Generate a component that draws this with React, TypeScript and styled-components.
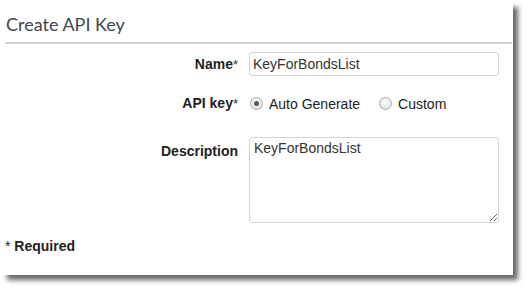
import React from 'react';
import styled, { createGlobalStyle } from 'styled-components';

const GlobalStyle = createGlobalStyle`
  html, body {
    margin: 0;
    padding: 0;
    background: #ffffff;
  }
  * {
    box-sizing: border-box;
  }
`;

/** Create API Key dialog */
const App = () => {
  return (
    <>
      <GlobalStyle />
      <Page>
        <Panel>
          <Header>
            <Title>Create API Key</Title>
          </Header>
          <Form>
            <Row $top={8} $align='center'>
              <Label>
                Name<Star>*</Star>
              </Label>
              <TextInput defaultValue='KeyForBondsList' />
            </Row>
            <Row $top={17} $align='center'>
              <Label>
                API key<Star>*</Star>
              </Label>
              <RadioGroup>
                <RadioOption>
                  <RadioDot $checked />
                  Auto Generate
                </RadioOption>
                <RadioOption>
                  <RadioDot />
                  Custom
                </RadioOption>
              </RadioGroup>
            </Row>
            <Row $top={23} $align='start'>
              <Label $padTop={4}>Description</Label>
              <TextArea defaultValue='KeyForBondsList' />
            </Row>
          </Form>
          <RequiredNote>
            <span>* </span>
            <strong>Required</strong>
          </RequiredNote>
        </Panel>
      </Page>
    </>
  );
};
export default App;

const Page = styled.div`
  width: 528px;
  height: 290px;
  padding: 0 15px 15px 0;
`;

const Panel = styled.section`
  width: 513px;
  height: 275px;
  background: #ffffff;
  box-shadow: 6px 6px 5px -1px rgba(0, 0, 0, 0.6);
  display: flex;
  flex-direction: column;
`;

const Header = styled.div`
  margin: 0 1px 0 5px;
  height: 44px;
  border-bottom: 2px solid #cfcfcf;
  display: flex;
  align-items: flex-end;
  padding: 0 0 6px 1px;
`;

const Title = styled.h2`
  margin: 0;
  font-family: Lato, 'Open Sans', sans-serif;
  font-weight: 400;
  font-size: 18px;
  line-height: 24px;
  color: #3f4650;
`;

const Form = styled.div`
  display: flex;
  flex-direction: column;
`;

const Row = styled.div<{ $top: number; $align: string }>`
  display: grid;
  grid-template-columns: 238px 250px;
  column-gap: 11px;
  align-items: ${({ $align }) => $align};
  margin-top: ${({ $top }) => $top}px;
`;

const Label = styled.label<{ $padTop?: number }>`
  text-align: right;
  font-family: 'Liberation Sans', Arial, sans-serif;
  font-weight: 700;
  font-size: 14px;
  line-height: 20px;
  color: #222222;
  padding-top: ${({ $padTop }) => $padTop ?? 0}px;
`;

const Star = styled.span`
  font-weight: 400;
  font-size: 13px;
  color: #333333;
`;

const TextInput = styled.input`
  width: 250px;
  height: 24px;
  border: 1px solid #d4d4d4;
  border-radius: 3px;
  padding: 0 3px;
  font-family: 'Liberation Sans', Arial, sans-serif;
  font-size: 14px;
  color: #333333;
  outline: none;
`;

const RadioGroup = styled.div`
  display: flex;
  align-items: center;
  gap: 18px;
  height: 20px;
`;

const RadioOption = styled.label`
  display: flex;
  align-items: center;
  gap: 6px;
  font-family: 'Liberation Sans', Arial, sans-serif;
  font-size: 14px;
  color: #222222;
`;

const RadioDot = styled.span<{ $checked?: boolean }>`
  width: 13px;
  height: 13px;
  margin-left: 1px;
  border-radius: 50%;
  border: 1px solid #a9a9a9;
  background: radial-gradient(circle at 50% 35%, #fdfdfd 0%, #dcdcdc 100%);
  display: flex;
  align-items: center;
  justify-content: center;

  &::after {
    content: '';
    display: ${({ $checked }) => ($checked ? 'block' : 'none')};
    width: 5px;
    height: 5px;
    border-radius: 50%;
    background: #555555;
  }
`;

const TextArea = styled.textarea`
  width: 250px;
  height: 86px;
  border: 1px solid #d4d4d4;
  border-radius: 3px;
  padding: 1px 4px;
  font-family: 'Liberation Sans', Arial, sans-serif;
  font-size: 14px;
  line-height: 18px;
  color: #333333;
  outline: none;
`;

const RequiredNote = styled.p`
  margin: 13px 0 0 5px;
  font-family: 'Liberation Sans', Arial, sans-serif;
  font-size: 14px;
  line-height: 20px;
  color: #222222;

  strong {
    font-weight: 700;
  }
`;
